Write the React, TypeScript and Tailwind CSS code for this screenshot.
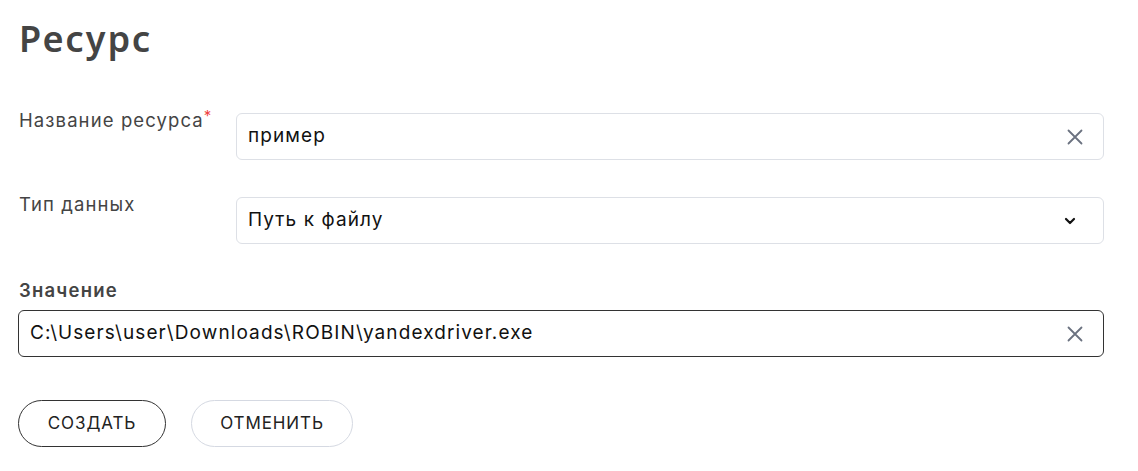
import React from "react";

const XIcon = () => (
  <svg width="18" height="18" viewBox="0 0 18 18" fill="none" stroke="#6b7280" strokeWidth="1.8" strokeLinecap="round">
    <path d="M2.5 2.5 L15.5 15.5 M15.5 2.5 L2.5 15.5" />
  </svg>
);

const Chevron = () => (
  <svg width="14" height="14" viewBox="0 0 14 14" fill="none" stroke="#111" strokeWidth="2.2" strokeLinecap="round" strokeLinejoin="round">
    <path d="M3 5 L7 9 L11 5" />
  </svg>
);

export default function App() {
  return (
    <div className="bg-white w-[1138px] h-[471px] pl-[18px] pt-[16px]" style={{ fontFamily: "Inter, 'Noto Sans', sans-serif" }}>
      <h1 className="text-[36px] leading-[46px] font-semibold text-[#444444] pl-[1px] tracking-[2px]" style={{ fontFamily: "'Noto Sans', Inter, sans-serif" }}>Ресурс</h1>
      <div className="mt-[51px] flex w-[1086px]">
        <div className="w-[218px] text-[18.5px] leading-[22px] text-[#444444] pl-[1px] -mt-[4px] tracking-[1.1px]">
          Название ресурса<span className="text-[#ef4444] align-top text-[15px] leading-[14px]">*</span>
        </div>
        <div className="flex-1 h-[47px] rounded-[6px] border border-[#dde0e6] flex items-center justify-between pl-[11px] pr-[19px]">
          <span className="text-[19px] text-[#111111] tracking-[1.1px]">пример</span>
          <XIcon />
        </div>
      </div>
      <div className="mt-[37px] flex w-[1086px]">
        <div className="w-[218px] text-[18.5px] leading-[22px] text-[#444444] pl-[1px] -mt-[4px] tracking-[1.1px]">Тип данных</div>
        <div className="flex-1 h-[47px] rounded-[6px] border border-[#dde0e6] flex items-center justify-between pl-[11px] pr-[26px]">
          <span className="text-[19px] text-[#111111] tracking-[1.1px]">Путь к файлу</span>
          <Chevron />
        </div>
      </div>
      <div className="mt-[35px] text-[18.5px] leading-[22px] font-semibold text-[#444444] pl-[1px] tracking-[1.2px]">Значение</div>
      <div className="mt-[9px] w-[1086px] h-[47px] rounded-[6px] border border-[#333333] flex items-center justify-between pl-[11px] pr-[19px]">
        <span className="text-[19px] text-[#111111] tracking-[1.1px]">C:\Users\user\Downloads\ROBIN\yandexdriver.exe</span>
        <XIcon />
      </div>
      <div className="mt-[43px] flex gap-[25px]">
        <button className="h-[47px] w-[148px] rounded-full border border-[#333333] text-[17px] tracking-[0.9px] text-[#222222] bg-white">СОЗДАТЬ</button>
        <button className="h-[47px] w-[162px] rounded-full border border-[#d5d9e2] text-[17px] tracking-[0.9px] text-[#222222] bg-white">ОТМЕНИТЬ</button>
      </div>
    </div>
  );
}
